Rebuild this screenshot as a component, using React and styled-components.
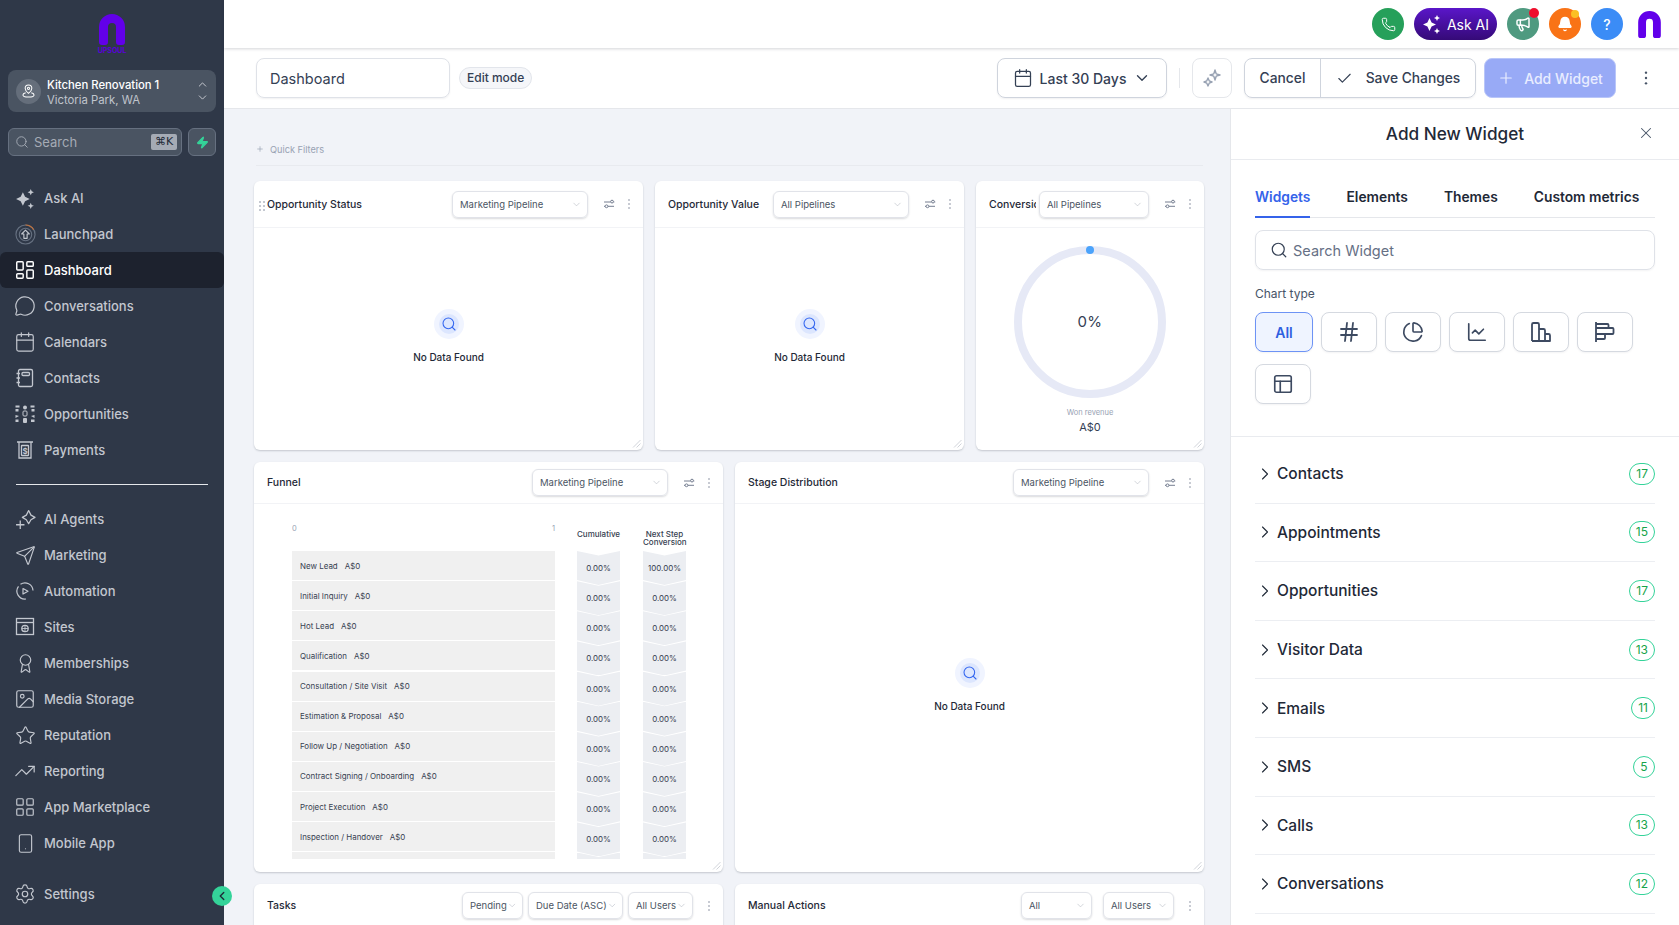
import styled, { createGlobalStyle } from "styled-components";
import {
  Calendar, Check, ChevronDown, ChevronRight, ChevronLeft, ChevronUp, ChartLine, ChartPie, Hash, Image, LayoutDashboard,
  LayoutGrid, MessageCircle, PanelsTopLeft, Phone, Plus, Search, Send, Settings, Smartphone, Star, TrendingUp, X, Zap, Bell, Megaphone, Award,
} from "lucide-react";

const GlobalStyle = createGlobalStyle`
  html, body { margin: 0; padding: 0; background: #f1f3f8; }
  body { font-family: Inter, "Liberation Sans", sans-serif; color: #1f2937; }
  * { box-sizing: border-box; }
`;

const Page = styled.div`
  width: 1679px;
  height: 925px;
  display: flex;
  overflow: hidden;
`;

// sidebar
const Sidebar = styled.aside`
  width: 224px;
  flex: none;
  background: #2f3848;
  display: flex;
  flex-direction: column;
  position: relative;
`;

const LogoBox = styled.div`
  height: 70px;
  padding-top: 14px;
  display: flex;
  flex-direction: column;
  align-items: center;
`;

const LogoText = styled.span`
  font-size: 7px;
  line-height: 7px;
  margin-top: 2px;
  font-weight: 700;
  color: #5a00dc;
`;

const LocationCard = styled.div`
  margin: 0 8px;
  height: 42px;
  border-radius: 8px;
  background: #4a5462;
  display: flex;
  align-items: center;
  padding: 0 7px 0 8px;
  gap: 6px;
  color: #fff;
`;

const LocationAvatar = styled.div`
  width: 25px;
  height: 25px;
  border-radius: 50%;
  background: #656e7b;
  display: flex;
  align-items: center;
  justify-content: center;
  flex: none;
`;

const LocationText = styled.div`
  flex: 1;
  display: flex;
  flex-direction: column;
  padding-top: 3px;
`;

const LocationName = styled.span`
  font-size: 11.3px;
  line-height: 15px;
  font-weight: 500;
`;

const LocationSub = styled.span`
  font-size: 11.3px;
  line-height: 15px;
  color: #c0c5cd;
`;

const UpDown = styled.span`
  display: flex;
  flex-direction: column;
  gap: 0;
  color: #d5d8dd;
`;

const SearchRow = styled.div`
  display: flex;
  gap: 6px;
  margin: 16px 8px 0;
`;

const SearchBox = styled.div`
  flex: 1;
  height: 28px;
  background: #4a5462;
  border: 1px solid #667080;
  border-radius: 6px;
  display: flex;
  align-items: center;
  gap: 5px;
  padding: 0 4px 0 6px;
  color: #a5abb5;
  font-size: 13px;
`;

const KeyHint = styled.span`
  margin-left: auto;
  width: 26px;
  height: 16px;
  border-radius: 2px;
  background: #a5abb5;
  color: #232a38;
  font-size: 11px;
  line-height: 16px;
  text-align: center;
  font-family: "DejaVu Sans", sans-serif;
`;

const BoltButton = styled.div`
  width: 28px;
  height: 28px;
  background: #4a5462;
  border: 1px solid #667080;
  border-radius: 6px;
  display: flex;
  align-items: center;
  justify-content: center;
`;

const NavList = styled.nav`
  margin-top: ${(p) => p.$top}px;
  display: flex;
  flex-direction: column;
`;

const NavItem = styled.div`
  height: 36px;
  display: flex;
  align-items: center;
  gap: 10px;
  padding-left: 16px;
  border-radius: 6px;
  font-size: 13px;
  font-weight: 500;
  color: ${(p) => (p.$active ? "#ffffff" : "#c3c7cf")};
  background: ${(p) => (p.$active ? "#1d222e" : "transparent")};
`;

const NavIcon = styled.span`
  width: 18px;
  height: 18px;
  display: flex;
  align-items: center;
  justify-content: center;
  flex: none;

  svg {
    flex: none;
  }
`;

const SideDivider = styled.div`
  height: 1px;
  background: #e5e7eb;
  margin: 16px 16px 0;
`;

const CollapseButton = styled.div`
  position: absolute;
  left: 212px;
  top: 886px;
  width: 20px;
  height: 20px;
  border-radius: 50%;
  background: #34d399;
  color: #1f2937;
  display: flex;
  align-items: center;
  justify-content: center;
  z-index: 5;
`;

// top bar
const Main = styled.div`
  flex: 1;
  min-width: 0;
  display: flex;
  flex-direction: column;
`;

const TopBar = styled.header`
  height: 48px;
  background: #fff;
  display: flex;
  align-items: center;
  justify-content: flex-end;
  gap: 10px;
  padding-right: 18px;
  box-shadow: 0 1px 3px rgba(16, 24, 40, 0.18);
  position: relative;
  z-index: 2;
  flex: none;
`;

const RoundAction = styled.div`
  width: 32px;
  height: 32px;
  border-radius: 50%;
  background: ${(p) => p.$bg};
  color: #fff;
  display: flex;
  align-items: center;
  justify-content: center;
  position: relative;
  font-size: 14px;
  font-weight: 500;
`;

const NotifyDot = styled.span`
  position: absolute;
  right: ${(p) => p.$right}px;
  top: ${(p) => p.$top}px;
  width: ${(p) => p.$size}px;
  height: ${(p) => p.$size}px;
  border-radius: 50%;
  background: ${(p) => p.$color};
`;

const AskAiButton = styled.div`
  width: 83px;
  height: 32px;
  border-radius: 16px;
  background: linear-gradient(180deg, #5a16c9 0%, #350a77 100%);
  color: #fff;
  font-size: 14px;
  font-weight: 400;
  display: flex;
  align-items: center;
  justify-content: center;
  gap: 5px;
`;

const TopLogo = styled.div`
  margin-left: 5px;
  display: flex;
`;

// toolbar
const ToolBar = styled.div`
  height: 61px;
  background: #fff;
  border-bottom: 1px solid #e5e7eb;
  display: flex;
  align-items: center;
  padding: 0 25px 0 32px;
  flex: none;
`;

const NameField = styled.div`
  width: 194px;
  height: 40px;
  border: 1px solid #dfe2e8;
  border-radius: 8px;
  box-shadow: 0 1px 2px rgba(16, 24, 40, 0.06);
  display: flex;
  align-items: center;
  padding-left: 13px;
  font-size: 14.5px;
  color: #344054;
`;

const EditPill = styled.span`
  margin-left: 9px;
  height: 22px;
  padding: 0 7px;
  border: 1px solid #e2e5eb;
  border-radius: 11px;
  background: #f5f6f9;
  font-size: 12px;
  line-height: 20px;
  font-weight: 500;
  color: #344054;
`;

const DateButton = styled.div`
  margin-left: auto;
  width: 170px;
  height: 40px;
  border: 1px solid #cfd4dd;
  border-radius: 8px;
  box-shadow: 0 1px 2px rgba(16, 24, 40, 0.06);
  display: flex;
  align-items: center;
  justify-content: center;
  gap: 7px;
  font-size: 14px;
  font-weight: 500;
  color: #344054;
`;

const BarRule = styled.div`
  width: 1px;
  height: 20px;
  background: #e5e7eb;
  margin: 0 12px;
`;

const MagicButton = styled.div`
  width: 40px;
  height: 40px;
  border: 1px solid #e5e7eb;
  border-radius: 8px;
  display: flex;
  align-items: center;
  justify-content: center;
  color: #98a2b3;
`;

const ButtonGroup = styled.div`
  margin-left: 12px;
  height: 40px;
  display: flex;
  border: 1px solid #cfd4dd;
  border-radius: 8px;
  box-shadow: 0 1px 2px rgba(16, 24, 40, 0.06);
  font-size: 13.8px;
  font-weight: 500;
  color: #344054;
`;

const CancelPart = styled.div`
  width: 76px;
  border-right: 1px solid #cfd4dd;
  display: flex;
  align-items: center;
  justify-content: center;
`;

const SavePart = styled.div`
  width: 154px;
  display: flex;
  align-items: center;
  justify-content: center;
  gap: 13px;
`;

const AddButton = styled.div`
  margin-left: 8px;
  width: 132px;
  height: 40px;
  border: 1px solid #b9c6f9;
  border-radius: 8px;
  background: #98aaf6;
  color: #e9edff;
  font-size: 14px;
  font-weight: 500;
  display: flex;
  align-items: center;
  justify-content: center;
  gap: 9px;
`;

const BarDots = styled.div`
  margin-left: 22px;
  display: flex;
  color: #475467;
`;

// canvas
const Body = styled.div`
  flex: 1;
  min-height: 0;
  display: flex;
`;

const Canvas = styled.main`
  flex: 1;
  min-width: 0;
  padding: 0 26px 0 30px;
  overflow: hidden;
`;

const QuickFilters = styled.div`
  margin: 32px 1px 15px 2px;
  height: 25px;
  padding-bottom: 8px;
  border-bottom: 1px solid #e8eaef;
  display: flex;
  align-items: center;
  gap: 6px;
  font-size: 9.2px;
  color: #98a2b3;
`;

const WidgetRow = styled.div`
  display: flex;
  gap: 12px;
  margin-bottom: 12px;
`;

const Widget = styled.section`
  width: ${(p) => p.$w}px;
  height: ${(p) => p.$h}px;
  background: #fff;
  border-radius: 6px;
  box-shadow: 0 1px 2px rgba(16, 24, 40, 0.2);
  display: flex;
  flex-direction: column;
  position: relative;
  flex: none;
`;

const WidgetHead = styled.header`
  height: ${(p) => p.$h || 47}px;
  flex: none;
  border-bottom: 1px solid #f2f3f6;
  display: flex;
  align-items: center;
  padding: 0 8px 0 13px;
`;

const WidgetTitle = styled.h3`
  margin: 0;
  flex: 1;
  min-width: 0;
  overflow: hidden;
  white-space: nowrap;
  font-size: 10.5px;
  font-weight: 500;
  color: #1f2937;
`;

const DragHandle = styled.span`
  position: absolute;
  left: 5px;
  top: 20px;
  display: flex;
  color: #c5c9d1;
`;

const Select = styled.div`
  width: ${(p) => p.$w}px;
  height: 27px;
  margin-left: ${(p) => p.$gap || 0}px;
  flex: none;
  border: 1px solid #e1e3e9;
  border-radius: 6px;
  box-shadow: 0 1px 2px rgba(16, 24, 40, 0.16);
  display: flex;
  align-items: center;
  justify-content: space-between;
  padding: 0 5px 0 7px;
  font-size: 9.5px;
  color: #4b5563;
  white-space: nowrap;
`;

const HeadTool = styled.span`
  width: 12px;
  margin-left: ${(p) => p.$gap}px;
  display: flex;
  justify-content: center;
  color: #667085;
  flex: none;
`;

const ResizeGrip = styled.span`
  position: absolute;
  right: 2px;
  bottom: 2px;
  display: flex;
  color: #c5c9d1;
`;

const EmptyBody = styled.div`
  flex: 1;
  display: flex;
  flex-direction: column;
  align-items: center;
  justify-content: center;
  gap: 10px;
  padding-bottom: 5px;
`;

const EmptyHalo = styled.div`
  width: 30px;
  height: 30px;
  border-radius: 50%;
  background: #f0f4ff;
  display: flex;
  align-items: center;
  justify-content: center;
`;

const EmptyCore = styled.div`
  width: 20px;
  height: 20px;
  border-radius: 50%;
  background: #dce6fe;
  color: #3366f0;
  display: flex;
  align-items: center;
  justify-content: center;
`;

const EmptyText = styled.span`
  font-size: 10px;
  line-height: 16px;
  font-weight: 500;
  color: #1f2937;
`;

const GaugeBody = styled.div`
  flex: 1;
  display: flex;
  flex-direction: column;
  align-items: center;
  padding-top: 18px;
`;

const GaugeBox = styled.div`
  width: 152px;
  height: 152px;
  position: relative;
`;

const GaugeValue = styled.span`
  position: absolute;
  inset: 0;
  display: flex;
  align-items: center;
  justify-content: center;
  font-size: 15px;
  color: #344054;
  letter-spacing: 0.5px;
  padding-bottom: 1px;
`;

const GaugeLabel = styled.span`
  margin-top: 9px;
  font-size: 7.5px;
  line-height: 12px;
  color: #98a2b3;
`;

const GaugeAmount = styled.span`
  margin-top: 1px;
  font-size: 11px;
  line-height: 14px;
  font-weight: 400;
  color: #344054;
`;

// funnel
const FunnelChart = styled.div`
  margin: 17px 0 0 38px;
  height: 338px;
  overflow: hidden;
  display: flex;
`;

const BarColumn = styled.div`
  width: 263px;
  flex: none;
  margin-right: 22px;
`;

const AxisRow = styled.div`
  height: 30px;
  display: flex;
  justify-content: space-between;
  font-size: 7.5px;
  color: #98a2b3;
  padding-top: 3px;
`;

const StageBar = styled.div`
  height: 29px;
  margin-bottom: 1.15px;
  background: #f0f0f0;
  display: flex;
  align-items: center;
  gap: 7px;
  padding-left: 8px;
  font-size: 7.95px;
  color: #374151;
  white-space: nowrap;
`;

const RateColumn = styled.div`
  width: 43px;
  flex: none;
  margin-right: 23px;
`;

const RateHead = styled.div`
  height: 30px;
  padding-top: 9px;
  text-align: center;
  font-size: 8px;
  line-height: 8px;
  font-weight: 500;
  color: #374151;
  white-space: nowrap;
`;

const RateCell = styled.div`
  height: 34px;
  margin-bottom: -3.85px;
  background: #eceef2;
  clip-path: polygon(0 0, 50% 4.5px, 100% 0, 100% calc(100% - 5px), 50% 100%, 0 calc(100% - 5px));
  display: flex;
  align-items: center;
  justify-content: center;
  font-size: 7.95px;
  color: #374151;
`;

// right panel
const Panel = styled.aside`
  width: 449px;
  flex: none;
  background: #fff;
  border-left: 1px solid #e5e7eb;
  display: flex;
  flex-direction: column;
`;

const PanelHead = styled.div`
  height: 51px;
  flex: none;
  border-bottom: 1px solid #e9ebef;
  display: flex;
  align-items: center;
  justify-content: center;
  position: relative;
  padding-bottom: 1px;
  font-size: 17.2px;
  font-weight: 500;
  color: #1f2937;
`;

const PanelClose = styled.span`
  position: absolute;
  right: 24px;
  top: 15px;
  display: flex;
  color: #475467;
`;

const PanelTop = styled.div`
  padding: 27px 24px 32px;
  border-bottom: 1px solid #e9ebef;
`;

const Tabs = styled.div`
  display: flex;
  gap: 36px;
  border-bottom: 1px solid #e5e7eb;
`;

const Tab = styled.div`
  height: 31px;
  line-height: 20px;
  font-size: 13.8px;
  font-weight: 600;
  color: ${(p) => (p.$active ? "#3563ea" : "#1f2937")};
  border-bottom: 2px solid ${(p) => (p.$active ? "#3563ea" : "transparent")};
  margin-bottom: -1px;
  white-space: nowrap;
`;

const WidgetSearch = styled.div`
  margin-top: 12px;
  height: 40px;
  border: 1px solid #dfe2e8;
  border-radius: 8px;
  box-shadow: 0 1px 2px rgba(16, 24, 40, 0.05);
  display: flex;
  align-items: center;
  gap: 5px;
  padding-left: 14px;
  font-size: 14.5px;
  color: #667085;
`;

const ChartLabel = styled.div`
  margin-top: 16px;
  font-size: 12px;
  line-height: 16px;
  color: #475467;
`;

const ChartTypes = styled.div`
  margin-top: 10px;
  display: flex;
  flex-wrap: wrap;
  gap: 12px 8px;
`;

const ChartType = styled.div`
  width: ${(p) => (p.$active ? 58 : 56)}px;
  height: 40px;
  border-radius: 8px;
  border: 1px solid ${(p) => (p.$active ? "#6d93f5" : "#d5d9e0")};
  background: ${(p) => (p.$active ? "#eff4ff" : "#fff")};
  color: ${(p) => (p.$active ? "#2f5fe0" : "#3d4a61")};
  box-shadow: 0 1px 2px rgba(16, 24, 40, 0.05);
  display: flex;
  align-items: center;
  justify-content: center;
  font-size: 14px;
  font-weight: 600;
`;

const MetricList = styled.div`
  padding: 8px 24px 0;
`;

const MetricRow = styled.div`
  height: 58.6px;
  border-bottom: 1px solid #eceef2;
  display: flex;
  align-items: center;
  gap: 2px;
  font-size: 15.5px;
  font-weight: 500;
  color: #1f2937;
`;

const MetricCount = styled.span`
  margin-left: auto;
  min-width: 22px;
  height: 22px;
  padding: 0 6px;
  border: 1px solid #34d399;
  border-radius: 11px;
  font-size: 12px;
  line-height: 20px;
  font-weight: 400;
  text-align: center;
  color: #16a34a;
`;

// icons
const UpsoulMark = ({ w = 26, h = 31 }) => (
  <svg width={w} height={h} viewBox="0 0 26 31" fill="#6200ea">
    <path d="M0 13a13 13 0 0 1 26 0v15a3 3 0 0 1-3 3h-3a3 3 0 0 1-3-3V13a4 4 0 0 0-8 0v15a3 3 0 0 1-3 3H3a3 3 0 0 1-3-3z" />
  </svg>
);

const Sparkles = ({ size = 20 }) => (
  <svg width={size} height={size} viewBox="0 0 20 20" fill="currentColor">
    <path d="M7.5 4 9.6 8.4 14 10.5 9.6 12.6 7.5 17 5.4 12.6 1 10.5 5.4 8.4z" />
    <path d="M15 1 15.9 3.1 18 4 15.9 4.9 15 7 14.1 4.9 12 4 14.1 3.1z" />
    <path d="M15 14 15.9 16.1 18 17 15.9 17.9 15 20 14.1 17.9 12 17 14.1 16.1z" />
  </svg>
);

const Launch = () => (
  <svg width="21" height="21" viewBox="0 0 22 22" fill="none" stroke="currentColor" strokeWidth="1.2">
    <circle cx="11" cy="11" r="10" stroke="#667080" />
    <path d="M11 1a10 10 0 0 1 8.6 5" stroke="#c2703a" />
    <circle cx="11" cy="11" r="6.5" stroke="#667080" />
    <path d="M11 6.5 7 10.5H9.3V15h3.4v-4.5H15z" strokeLinejoin="round" />
  </svg>
);

const ContactsIcon = () => (
  <svg width="20" height="20" viewBox="0 0 20 20" fill="none" stroke="currentColor" strokeWidth="1.3">
    <rect x="3.5" y="1.5" width="14" height="17" rx="1.5" />
    <rect x="7" y="4.5" width="7.5" height="3" rx="1" />
    <path d="M1.5 5.5h3.5M1.5 10h3.5M1.5 14.5h3.5" />
  </svg>
);

const OppIcon = () => (
  <svg width="20" height="20" viewBox="0 0 20 20" fill="currentColor">
    <rect x="0.5" y="1.5" width="4" height="2" /><rect x="0.5" y="5" width="3" height="2.5" />
    <path d="M15.5 1.5h4v2h-4zM16.5 5h3v2.5h-3z" />
    <circle cx="10" cy="3.5" r="2" />
    <rect x="8" y="7" width="4" height="5" rx="1" fill="none" stroke="currentColor" />
    <rect x="8" y="14" width="4" height="5" rx="1" />
    <path d="M0.5 11l3.5 1-3.5 2zM0.5 15.5h3v2.5h-3z" />
    <path d="M19.5 11l-3.5 1 3.5 2zM16 15.5h3.5v2.5H16z" />
  </svg>
);

const PaymentIcon = () => (
  <svg width="20" height="20" viewBox="0 0 20 20" fill="none" stroke="currentColor" strokeWidth="1.3">
    <path d="M2 2h16M4 2v16h12V2" />
    <rect x="6.5" y="5.5" width="7" height="10" rx="0.5" />
    <text x="10" y="13.5" fontSize="8" fontWeight="700" textAnchor="middle" fill="currentColor" stroke="none">$</text>
  </svg>
);

const AgentIcon = () => (
  <svg width="21" height="21" viewBox="0 0 20 20" fill="none" stroke="currentColor" strokeWidth="1.2">
    <path d="M13 1.5 15.2 5.8 19 8 15.2 10.2 13 14 10.8 10.2 7 8 10.8 5.8z" strokeLinejoin="round" />
    <path d="M5 11v8M1 15h8" />
  </svg>
);

const AutomationIcon = () => (
  <svg width="20" height="20" viewBox="0 0 20 20" fill="none" stroke="currentColor" strokeWidth="1.2">
    <path d="M18 9.5A8 8 0 0 0 5.5 3.3M3.5 5.3A8 8 0 0 0 11 18" />
    <path d="M8 7.5 13 10.3 8 13z" strokeLinejoin="round" />
  </svg>
);

const SitesIcon = () => (
  <svg width="20" height="20" viewBox="0 0 20 20" fill="none" stroke="currentColor" strokeWidth="1.3">
    <rect x="1.5" y="1.5" width="17" height="16" />
    <path d="M1.5 5.5h17" />
    <circle cx="10" cy="11.5" r="3.2" />
    <path d="M6.8 11.5h6.4M10 8.3v6.4" strokeWidth="0.9" />
  </svg>
);

const SwapIcon = () => (
  <svg width="12" height="12" viewBox="0 0 12 12" fill="none" stroke="currentColor" strokeWidth="0.9">
    <path d="M1 4h6.5M10.5 4h.8M1 8.3h1M5 8.3h6" />
    <circle cx="9" cy="3.6" r="1.4" />
    <circle cx="3.5" cy="8.3" r="1.4" />
  </svg>
);

const Dots = ({ size = 12, r = 0.7 }) => (
  <svg width={size} height={size} viewBox="0 0 12 12" fill="currentColor">
    <circle cx="6" cy="2" r={r} /><circle cx="6" cy="6" r={r} /><circle cx="6" cy="10" r={r} />
  </svg>
);

const DragDots = () => (
  <svg width="7" height="10" viewBox="0 0 7 10" fill="currentColor">
    <rect y="0" width="2" height="2" /><rect x="4" y="0" width="2" height="2" />
    <rect y="4" width="2" height="2" /><rect x="4" y="4" width="2" height="2" />
    <rect y="8" width="2" height="2" /><rect x="4" y="8" width="2" height="2" />
  </svg>
);

const Grip = () => (
  <svg width="9" height="9" viewBox="0 0 9 9" stroke="currentColor" strokeWidth="0.8">
    <path d="M1 8.5 8.5 1M4.5 8.5 8.5 4.5" />
  </svg>
);

const MagicIcon = () => (
  <svg width="20" height="20" viewBox="0 0 20 20" fill="none" stroke="currentColor" strokeWidth="1.4" strokeLinejoin="round">
    <path d="M13 2 14.2 5.8 18 7 14.2 8.2 13 12 11.8 8.2 8 7 11.8 5.8z" />
    <path d="M6 10 7.2 12.8 10 14 7.2 15.2 6 18 4.8 15.2 2 14 4.8 12.8z" />
  </svg>
);

const BarsIcon = () => (
  <svg width="22" height="22" viewBox="0 0 22 22" fill="none" stroke="currentColor" strokeWidth="1.8">
    <path d="M2 20V3.5A1.5 1.5 0 0 1 3.5 2h4A1.5 1.5 0 0 1 9 3.5V20M9 8h4.5A1.5 1.5 0 0 1 15 9.5V20M15 13h3.5a1.5 1.5 0 0 1 1.5 1.5V20H2" strokeLinejoin="round" />
  </svg>
);

const HBarsIcon = () => (
  <svg width="22" height="22" viewBox="0 0 22 22" fill="none" stroke="currentColor" strokeWidth="1.8">
    <path d="M2 1v20M2 3h11.5a1 1 0 0 1 1 1v3M2 7h16.5a1 1 0 0 1 1 1v4a1 1 0 0 1-1 1H2M2 13h8a1 1 0 0 1 1 1v3a1 1 0 0 1-1 1H2" strokeLinejoin="round" />
  </svg>
);

const mainNav = [
  { label: "Ask AI", icon: <Sparkles size={21} /> },
  { label: "Launchpad", icon: <Launch /> },
  { label: "Dashboard", icon: <LayoutDashboard size={22} strokeWidth={1.6} />, active: true },
  { label: "Conversations", icon: <MessageCircle size={22} strokeWidth={1.3} /> },
  { label: "Calendars", icon: <Calendar size={22} strokeWidth={1.3} /> },
  { label: "Contacts", icon: <ContactsIcon /> },
  { label: "Opportunities", icon: <OppIcon /> },
  { label: "Payments", icon: <PaymentIcon /> },
];

const toolNav = [
  { label: "AI Agents", icon: <AgentIcon /> },
  { label: "Marketing", icon: <Send size={21} strokeWidth={1.3} /> },
  { label: "Automation", icon: <AutomationIcon /> },
  { label: "Sites", icon: <SitesIcon /> },
  { label: "Memberships", icon: <Award size={21} strokeWidth={1.3} /> },
  { label: "Media Storage", icon: <Image size={22} strokeWidth={1.3} /> },
  { label: "Reputation", icon: <Star size={21} strokeWidth={1.3} /> },
  { label: "Reporting", icon: <TrendingUp size={22} strokeWidth={1.3} /> },
  { label: "App Marketplace", icon: <LayoutGrid size={22} strokeWidth={1.3} /> },
  { label: "Mobile App", icon: <Smartphone size={21} strokeWidth={1.3} /> },
];

const stages = [
  ["New Lead", "0.00%", "100.00%"],
  ["Initial Inquiry", "0.00%", "0.00%"],
  ["Hot Lead", "0.00%", "0.00%"],
  ["Qualification", "0.00%", "0.00%"],
  ["Consultation / Site Visit", "0.00%", "0.00%"],
  ["Estimation & Proposal", "0.00%", "0.00%"],
  ["Follow Up / Negotiation", "0.00%", "0.00%"],
  ["Contract Signing / Onboarding", "0.00%", "0.00%"],
  ["Project Execution", "0.00%", "0.00%"],
  ["Inspection / Handover", "0.00%", "0.00%"],
  ["", "", ""],
];

const metrics = [
  ["Contacts", 17], ["Appointments", 15], ["Opportunities", 17], ["Visitor Data", 13],
  ["Emails", 11], ["SMS", 5], ["Calls", 13], ["Conversations", 12],
];

function NavLink({ item }) {
  return (
    <NavItem $active={item.active}>
      <NavIcon>{item.icon}</NavIcon>
      {item.label}
    </NavItem>
  );
}

function Picker({ w, gap, children }) {
  return (
    <Select $w={w} $gap={gap}>
      {children}
      <ChevronDown size={11} color="#b4b9c3" strokeWidth={1.3} />
    </Select>
  );
}

function HeadTools({ filter = true }) {
  return (
    <>
      {filter && <HeadTool $gap={15}><SwapIcon /></HeadTool>}
      <HeadTool $gap={filter ? 8 : 10}><Dots /></HeadTool>
    </>
  );
}

function NoData() {
  return (
    <EmptyBody>
      <EmptyHalo>
        <EmptyCore><Search size={16} strokeWidth={1.6} /></EmptyCore>
      </EmptyHalo>
      <EmptyText>No Data Found</EmptyText>
    </EmptyBody>
  );
}

export default function App() {
  return (
    <Page>
      <GlobalStyle />
      <Sidebar>
        <LogoBox>
          <UpsoulMark />
          <LogoText>UPSOUL</LogoText>
        </LogoBox>
        <LocationCard>
          <LocationAvatar>
            <svg width="13" height="14" viewBox="0 0 14 15" fill="none" stroke="#fff" strokeWidth="1.1">
              <path d="M7 1a3.6 3.6 0 0 1 3.6 3.6C10.6 7.3 7 10 7 10S3.4 7.3 3.4 4.6A3.6 3.6 0 0 1 7 1z" />
              <circle cx="7" cy="4.6" r="1.2" />
              <path d="M4 9.5C2 10 1 10.8 1 11.8 1 13.2 3.7 14 7 14s6-.8 6-2.2c0-1-1-1.8-3-2.3" />
            </svg>
          </LocationAvatar>
          <LocationText>
            <LocationName>Kitchen Renovation 1</LocationName>
            <LocationSub>Victoria Park, WA</LocationSub>
          </LocationText>
          <UpDown>
            <ChevronUp size={13} strokeWidth={1.6} />
            <ChevronDown size={13} strokeWidth={1.6} />
          </UpDown>
        </LocationCard>
        <SearchRow>
          <SearchBox>
            <Search size={14} strokeWidth={1.6} />
            Search
            <KeyHint>⌘K</KeyHint>
          </SearchBox>
          <BoltButton><Zap size={13} fill="#34d399" color="#34d399" /></BoltButton>
        </SearchRow>
        <NavList $top={24}>
          {mainNav.map((item) => <NavLink key={item.label} item={item} />)}
        </NavList>
        <SideDivider />
        <NavList $top={16}>
          {toolNav.map((item) => <NavLink key={item.label} item={item} />)}
        </NavList>
        <NavList $top={15}>
          <NavLink item={{ label: "Settings", icon: <Settings size={22} strokeWidth={1.3} /> }} />
        </NavList>
        <CollapseButton><ChevronLeft size={14} strokeWidth={2.4} /></CollapseButton>
      </Sidebar>

      <Main>
        <TopBar>
          <RoundAction $bg="#26a05a"><Phone size={15} strokeWidth={1.6} /></RoundAction>
          <AskAiButton><Sparkles size={20} />Ask AI</AskAiButton>
          <RoundAction $bg="#4f9a80">
            <Megaphone size={16} strokeWidth={2.2} />
            <NotifyDot $right={0} $top={0} $size={10} $color="#ef0f2d" />
          </RoundAction>
          <RoundAction $bg="#f97316">
            <Bell size={16} fill="#fff" />
            <NotifyDot $right={2} $top={2} $size={8} $color="#fbbf24" />
          </RoundAction>
          <RoundAction $bg="#3b8cf6">?</RoundAction>
          <TopLogo><UpsoulMark w={23} h={27} /></TopLogo>
        </TopBar>

        <ToolBar>
          <NameField>Dashboard</NameField>
          <EditPill>Edit mode</EditPill>
          <DateButton>
            <Calendar size={20} strokeWidth={1.5} />
            Last 30 Days
            <ChevronDown size={18} strokeWidth={1.8} />
          </DateButton>
          <BarRule />
          <MagicButton><MagicIcon /></MagicButton>
          <ButtonGroup>
            <CancelPart>Cancel</CancelPart>
            <SavePart><Check size={17} strokeWidth={1.6} />Save Changes</SavePart>
          </ButtonGroup>
          <AddButton><Plus size={18} strokeWidth={1.6} />Add Widget</AddButton>
          <BarDots><Dots size={16} r={0.9} /></BarDots>
        </ToolBar>

        <Body>
          <Canvas>
            <QuickFilters><Plus size={8} />Quick Filters</QuickFilters>

            <WidgetRow>
              <Widget $w={389} $h={269}>
                <DragHandle><DragDots /></DragHandle>
                <WidgetHead>
                  <WidgetTitle>Opportunity Status</WidgetTitle>
                  <Picker w={136}>Marketing Pipeline</Picker>
                  <HeadTools />
                </WidgetHead>
                <NoData />
                <ResizeGrip><Grip /></ResizeGrip>
              </Widget>
              <Widget $w={309} $h={269}>
                <WidgetHead>
                  <WidgetTitle>Opportunity Value</WidgetTitle>
                  <Picker w={136}>All Pipelines</Picker>
                  <HeadTools />
                </WidgetHead>
                <NoData />
                <ResizeGrip><Grip /></ResizeGrip>
              </Widget>
              <Widget $w={228} $h={269}>
                <WidgetHead>
                  <WidgetTitle>Conversion Rate</WidgetTitle>
                  <Picker w={110} gap={3}>All Pipelines</Picker>
                  <HeadTools />
                </WidgetHead>
                <GaugeBody>
                  <GaugeBox>
                    <svg width="152" height="152" viewBox="0 0 152 152">
                      <circle cx="76" cy="76" r="72" fill="none" stroke="#e6e9f6" strokeWidth="8" />
                      <circle cx="76" cy="4" r="4" fill="#4ba3fb" />
                    </svg>
                    <GaugeValue>0%</GaugeValue>
                  </GaugeBox>
                  <GaugeLabel>Won revenue</GaugeLabel>
                  <GaugeAmount>A$0</GaugeAmount>
                </GaugeBody>
                <ResizeGrip><Grip /></ResizeGrip>
              </Widget>
            </WidgetRow>

            <WidgetRow>
              <Widget $w={469} $h={410}>
                <WidgetHead $h={42}>
                  <WidgetTitle>Funnel</WidgetTitle>
                  <Picker w={136}>Marketing Pipeline</Picker>
                  <HeadTools />
                </WidgetHead>
                <FunnelChart>
                  <BarColumn>
                    <AxisRow><span>0</span><span>1</span></AxisRow>
                    {stages.map(([name], i) => (
                      <StageBar key={i}>
                        {name && <span>{name}</span>}
                        {name && <span>A$0</span>}
                      </StageBar>
                    ))}
                  </BarColumn>
                  <RateColumn>
                    <RateHead>Cumulative</RateHead>
                    {stages.map((s, i) => <RateCell key={i}>{s[1]}</RateCell>)}
                  </RateColumn>
                  <RateColumn>
                    <RateHead>Next Step<br />Conversion</RateHead>
                    {stages.map((s, i) => <RateCell key={i}>{s[2]}</RateCell>)}
                  </RateColumn>
                </FunnelChart>
                <ResizeGrip><Grip /></ResizeGrip>
              </Widget>
              <Widget $w={469} $h={410}>
                <WidgetHead $h={42}>
                  <WidgetTitle>Stage Distribution</WidgetTitle>
                  <Picker w={136}>Marketing Pipeline</Picker>
                  <HeadTools />
                </WidgetHead>
                <NoData />
                <ResizeGrip><Grip /></ResizeGrip>
              </Widget>
            </WidgetRow>

            <WidgetRow>
              <Widget $w={469} $h={120}>
                <WidgetHead $h={44}>
                  <WidgetTitle>Tasks</WidgetTitle>
                  <Picker w={61}>Pending</Picker>
                  <Picker w={95} gap={5}>Due Date (ASC)</Picker>
                  <Picker w={65} gap={5}>All Users</Picker>
                  <HeadTools filter={false} />
                </WidgetHead>
              </Widget>
              <Widget $w={469} $h={120}>
                <WidgetHead $h={44}>
                  <WidgetTitle>Manual Actions</WidgetTitle>
                  <Picker w={71}>All</Picker>
                  <Picker w={71} gap={11}>All Users</Picker>
                  <HeadTools filter={false} />
                </WidgetHead>
              </Widget>
            </WidgetRow>
          </Canvas>

          <Panel>
            <PanelHead>
              Add New Widget
              <PanelClose><X size={18} strokeWidth={1.4} /></PanelClose>
            </PanelHead>
            <PanelTop>
              <Tabs>
                <Tab $active>Widgets</Tab>
                <Tab>Elements</Tab>
                <Tab>Themes</Tab>
                <Tab>Custom metrics</Tab>
              </Tabs>
              <WidgetSearch>
                <Search size={18} strokeWidth={1.6} color="#344054" />
                Search Widget
              </WidgetSearch>
              <ChartLabel>Chart type</ChartLabel>
              <ChartTypes>
                <ChartType $active>All</ChartType>
                <ChartType><Hash size={24} strokeWidth={1.8} /></ChartType>
                <ChartType><ChartPie size={22} strokeWidth={1.8} /></ChartType>
                <ChartType><ChartLine size={22} strokeWidth={1.8} /></ChartType>
                <ChartType><BarsIcon /></ChartType>
                <ChartType><HBarsIcon /></ChartType>
                <ChartType><PanelsTopLeft size={22} strokeWidth={1.8} /></ChartType>
              </ChartTypes>
            </PanelTop>
            <MetricList>
              {metrics.map(([name, count]) => (
                <MetricRow key={name}>
                  <ChevronRight size={20} strokeWidth={1.3} />
                  <span>{name}</span>
                  <MetricCount>{count}</MetricCount>
                </MetricRow>
              ))}
            </MetricList>
          </Panel>
        </Body>
      </Main>
    </Page>
  );
}
